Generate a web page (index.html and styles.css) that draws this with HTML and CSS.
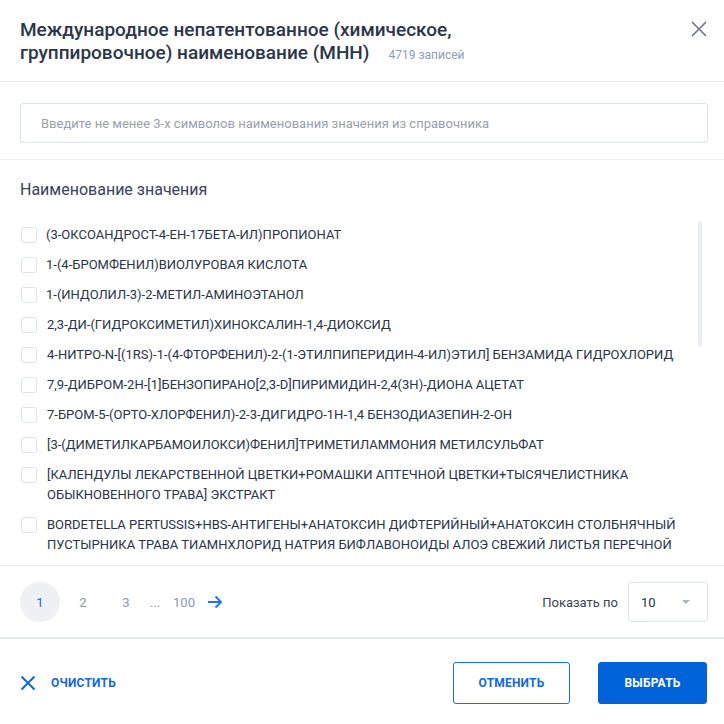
FILE: index.html
```html
<!DOCTYPE html>
<html lang="ru">
<head>
<meta charset="utf-8">
<title>МНН</title>
<link rel="stylesheet" href="styles.css">
</head>
<body>
<div class="modal">
  <header class="header">
    <h1 class="title"><span class="title-text">Международное непатентованное (химическое, группировочное) наименование (МНН)</span><span class="count">4719 записей</span></h1>
    <button class="close" aria-label="Закрыть">
      <svg width="16" height="16" viewBox="0 0 16 16"><path d="M1 1L15 15M15 1L1 15" stroke="#6b7488" stroke-width="1.6" fill="none"/></svg>
    </button>
  </header>
  <section class="search">
    <input class="search-input" type="text" placeholder="Введите не менее 3-х символов наименования значения из справочника">
  </section>
  <section class="list-section">
    <h2 class="list-title">Наименование значения</h2>
    <div class="list-wrap">
      <ul class="list">
        <li class="row"><span class="cb"></span><span class="txt">(3-ОКСОАНДРОСТ-4-ЕН-17БЕТА-ИЛ)ПРОПИОНАТ</span></li>
        <li class="row"><span class="cb"></span><span class="txt">1-(4-БРОМФЕНИЛ)ВИОЛУРОВАЯ КИСЛОТА</span></li>
        <li class="row"><span class="cb"></span><span class="txt">1-(ИНДОЛИЛ-3)-2-МЕТИЛ-АМИНОЭТАНОЛ</span></li>
        <li class="row"><span class="cb"></span><span class="txt shift">2,3-ДИ-(ГИДРОКСИМЕТИЛ)ХИНОКСАЛИН-1,4-ДИОКСИД</span></li>
        <li class="row"><span class="cb"></span><span class="txt shift">4-НИТРО-N-[(1RS)-1-(4-ФТОРФЕНИЛ)-2-(1-ЭТИЛПИПЕРИДИН-4-ИЛ)ЭТИЛ] БЕНЗАМИДА ГИДРОХЛОРИД</span></li>
        <li class="row"><span class="cb"></span><span class="txt shift">7,9-ДИБРОМ-2Н-[1]БЕНЗОПИРАНО[2,3-D]ПИРИМИДИН-2,4(3Н)-ДИОНА АЦЕТАТ</span></li>
        <li class="row"><span class="cb"></span><span class="txt shift">7-БРОМ-5-(ОРТО-ХЛОРФЕНИЛ)-2-3-ДИГИДРО-1Н-1,4 БЕНЗОДИАЗЕПИН-2-ОН</span></li>
        <li class="row"><span class="cb"></span><span class="txt shift">[3-(ДИМЕТИЛКАРБАМОИЛОКСИ)ФЕНИЛ]ТРИМЕТИЛАММОНИЯ МЕТИЛСУЛЬФАТ</span></li>
        <li class="row"><span class="cb"></span><span class="txt shift">[КАЛЕНДУЛЫ ЛЕКАРСТВЕННОЙ ЦВЕТКИ+РОМАШКИ АПТЕЧНОЙ ЦВЕТКИ+ТЫСЯЧЕЛИСТНИКА<br>ОБЫКНОВЕННОГО ТРАВА] ЭКСТРАКТ</span></li>
        <li class="row"><span class="cb"></span><span class="txt shift">BORDETELLA PERTUSSIS+HBS-АНТИГЕНЫ+АНАТОКСИН ДИФТЕРИЙНЫЙ+АНАТОКСИН СТОЛБНЯЧНЫЙ<br>ПУСТЫРНИКА ТРАВА ТИАМНХЛОРИД НАТРИЯ БИФЛАВОНОИДЫ АЛОЭ СВЕЖИЙ ЛИСТЬЯ ПЕРЕЧНОЙ</span></li>
      </ul>
      <div class="scroll-thumb"></div>
    </div>
  </section>
  <section class="pager">
    <nav class="pages">
      <span class="page active">1</span>
      <span class="page">2</span>
      <span class="page">3</span>
      <span class="dots">...</span>
      <span class="page">100</span>
      <span class="next">
        <svg width="16" height="14" viewBox="0 0 16 14"><path d="M1 7H14M8.5 1.5L14 7L8.5 12.5" stroke="#1d7ae0" stroke-width="2" fill="none"/></svg>
      </span>
    </nav>
    <div class="per-page">
      <span class="per-label">Показать по</span>
      <div class="select"><span>10</span><span class="caret"></span></div>
    </div>
  </section>
  <footer class="footer">
    <button class="clear">
      <svg width="16" height="16" viewBox="0 0 16 16"><path d="M1.5 1.5L14.5 14.5M14.5 1.5L1.5 14.5" stroke="#1368d8" stroke-width="2" fill="none"/></svg>
      <span>Очистить</span>
    </button>
    <div class="actions">
      <button class="btn btn-outline">Отменить</button>
      <button class="btn btn-primary">Выбрать</button>
    </div>
  </footer>
</div>
</body>
</html>
```
FILE: styles.css
```css
* { box-sizing: border-box; }
html, body { margin: 0; padding: 0; background: #fff; }
body { font-family: Roboto, "Noto Sans", Arial, sans-serif; color: #2b3245; }

.modal { width: 724px; height: 724px; display: flex; flex-direction: column; overflow: hidden; }

.header {
  display: flex; justify-content: space-between; align-items: flex-start;
  padding: 18px 17px 17px 20px;
  border-bottom: 1px solid #eceff4;
}
.title {
  margin: 0; font-size: 19px; font-weight: 500; line-height: 23px;
  color: #2d3548; max-width: 520px;
}
.count { font-size: 12px; font-weight: 400; line-height: 1; color: #8e9bbb; margin-left: 19px; }
.close { border: 0; background: none; padding: 0; margin-top: 3px; width: 16px; height: 16px; display: block; }
.close svg { display: block; }

.search { padding: 21px 16px 16px 20px; border-bottom: 1px solid #eceff4; }
.search-input {
  width: 100%; height: 40px; border: 1px solid #dce4ee; border-radius: 3px;
  padding: 0 20px; font-family: Roboto, Arial, sans-serif; font-size: 13px; color: #2b3245; outline: none;
}
.search-input::placeholder { color: #9ba0a8; }

.list-section { padding: 20px 0 9px 0; border-bottom: 1px solid #e8ebf0; }
.list-title { margin: 0 0 20px 20px; font-size: 16px; font-weight: 400; line-height: 20px; color: #3a4256; }
.list-wrap { position: relative; height: 336px; overflow: hidden; }
.list { list-style: none; margin: 0; padding: 0 30px 0 21px; }
.row { display: flex; align-items: flex-start; padding: 5px 0; font-size: 13px; line-height: 20px; color: #2b3245; }
.cb { flex: none; width: 16px; height: 16px; margin-top: 2px; border: 1px solid #dfe4eb; border-radius: 3px; margin-right: 9px; }
.txt { white-space: nowrap; }
.txt.shift { margin-left: 1px; }
.scroll-thumb { position: absolute; left: 698px; top: 1px; width: 4px; height: 126px; border-radius: 2px; background: #e8eef6; }

.pager {
  display: flex; justify-content: space-between; align-items: center;
  padding: 16px 16px 15px 20px;
  border-bottom: 2px solid #e6e9ef;
}
.pages { display: flex; align-items: center; gap: 3px; }
.page {
  width: 40px; height: 40px; border-radius: 50%; display: flex; align-items: center; justify-content: center;
  font-size: 13px; color: #8a97b4;
}
.page.active { background: #eef0f3; color: #1e6fd9; }
.dots { width: 12px; text-align: center; font-size: 13px; color: #8a97b4; }
.next { width: 16px; display: flex; align-items: center; }
.next svg { display: block; }
.per-page { display: flex; align-items: center; gap: 10px; }
.per-label { font-size: 13px; color: #3a4256; }
.select {
  width: 80px; height: 40px; border: 1px solid #dfe5ee; border-radius: 3px;
  display: flex; align-items: center; justify-content: space-between;
  padding: 0 17px 0 12px; font-size: 13px; color: #2b3245;
}
.caret { width: 0; height: 0; border-left: 4px solid transparent; border-right: 4px solid transparent; border-top: 4px solid #aab3c2; }

.footer { flex: 1; display: flex; justify-content: space-between; align-items: flex-start; padding: 23px 17px 0 20px; }
.clear {
  display: flex; align-items: center; gap: 15px; border: 0; background: none; padding: 0; margin-top: 13px;
  font-family: Roboto, Arial, sans-serif; font-size: 12px; font-weight: 700; text-transform: uppercase; color: #1368d8; letter-spacing: 0.2px;
}
.clear svg { display: block; }
.actions { display: flex; gap: 28px; }
.btn {
  height: 42px; border-radius: 3px; font-family: Roboto, Arial, sans-serif; font-size: 12px; font-weight: 700;
  text-transform: uppercase; letter-spacing: 0.2px; cursor: pointer;
}
.btn-outline { width: 117px; background: #fff; border: 1px solid #1a6fd8; color: #1368d8; }
.btn-primary { width: 109px; background: #0062d9; border: 1px solid #0062d9; color: #fff; }
```
